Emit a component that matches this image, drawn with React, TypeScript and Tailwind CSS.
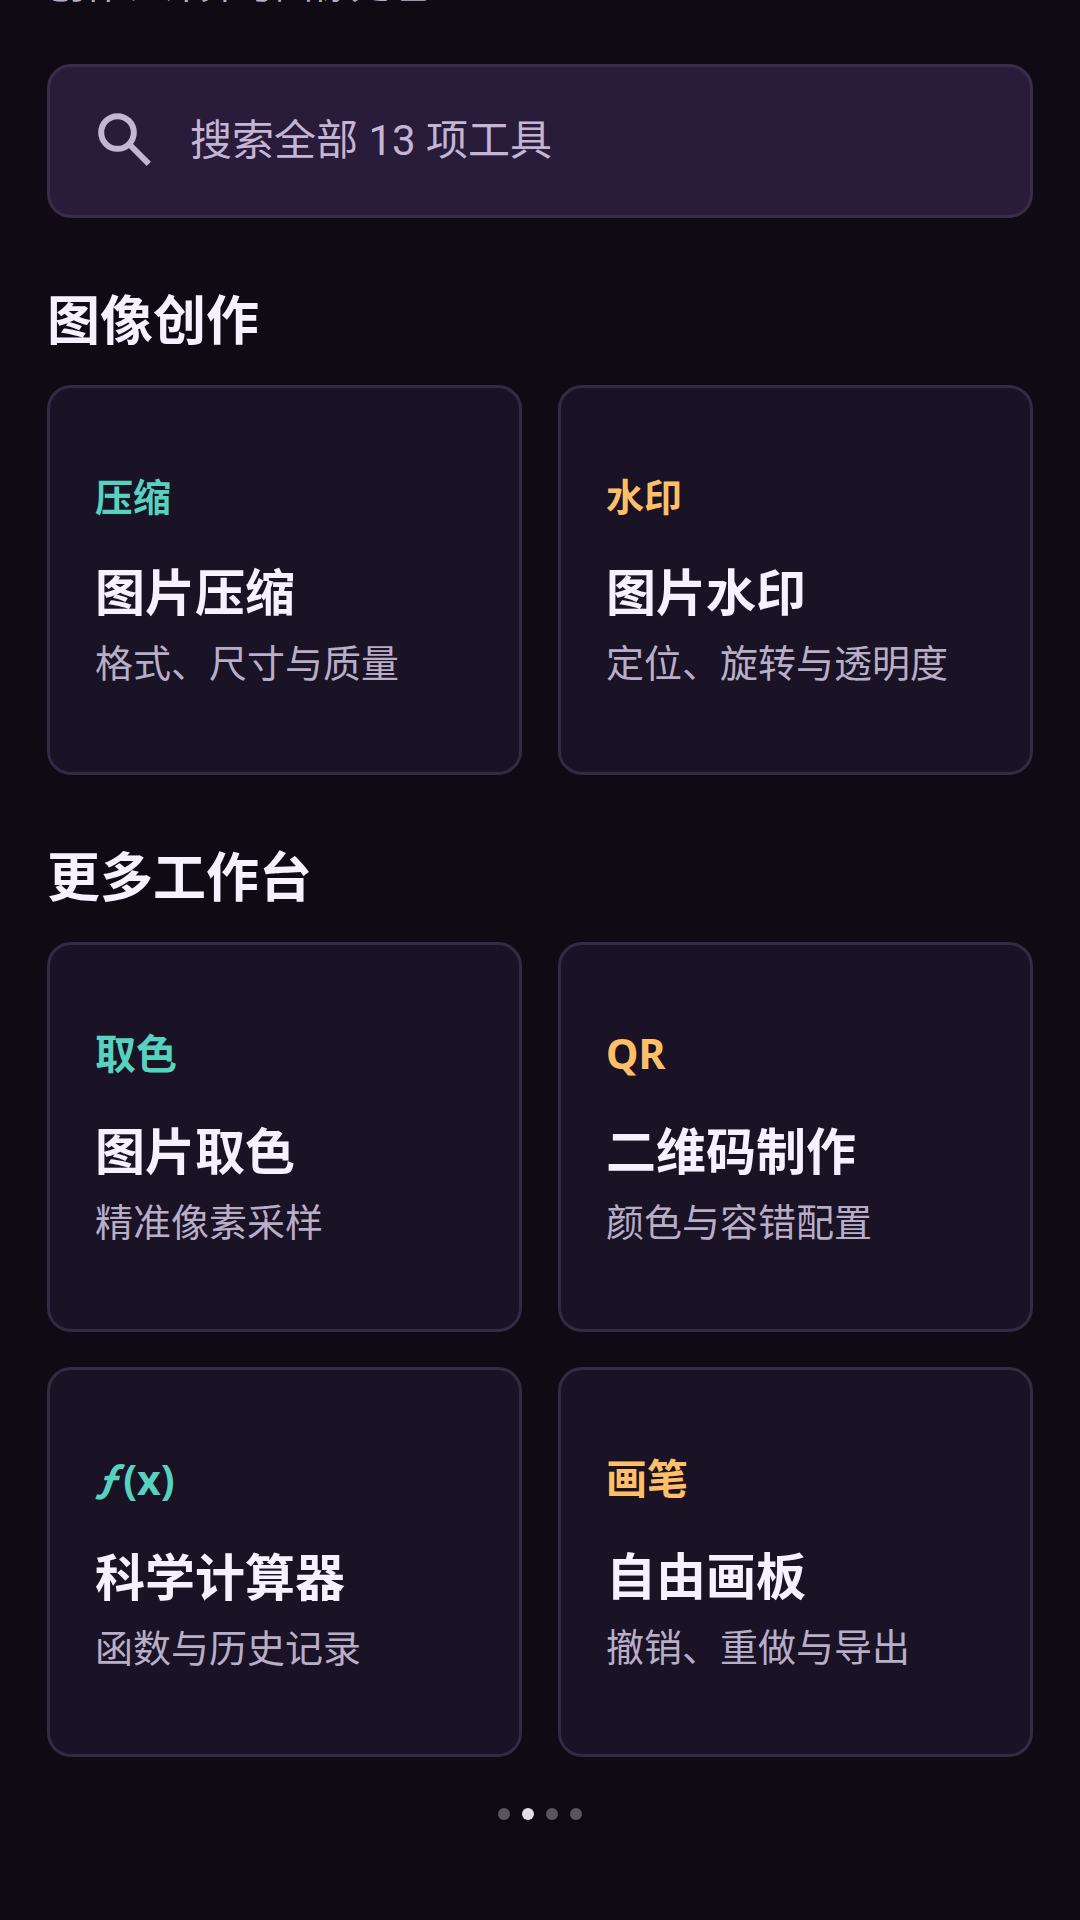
import React from 'react';
import clsx from 'clsx';

type Tool = {
  tag: React.ReactNode;
  title: string;
  desc: string;
  accent: 'teal' | 'amber';
  small?: boolean;
};

const imageTools: Tool[] = [
  { tag: '压缩', title: '图片压缩', desc: '格式、尺寸与质量', accent: 'teal', small: true },
  { tag: '水印', title: '图片水印', desc: '定位、旋转与透明度', accent: 'amber', small: true },
];

const moreTools: Tool[] = [
  { tag: '取色', title: '图片取色', desc: '精准像素采样', accent: 'teal' },
  { tag: 'QR', title: '二维码制作', desc: '颜色与容错配置', accent: 'amber' },
  {
    tag: (
      <>
        <i className="mr-1 font-['Noto_Sans_CJK_SC',sans-serif]">ƒ</i>(x)
      </>
    ),
    title: '科学计算器',
    desc: '函数与历史记录',
    accent: 'teal',
  },
  { tag: '画笔', title: '自由画板', desc: '撤销、重做与导出', accent: 'amber' },
];

const SearchIcon: React.FC = () => (
  <svg
    viewBox="0 0 72 72"
    className="h-[72px] w-[72px] shrink-0 text-[#c4b5d4]"
    fill="none"
    stroke="currentColor"
    strokeWidth="6"
    aria-hidden="true"
  >
    <circle cx="29.5" cy="27.5" r="16.3" />
    <path d="M40.5 38.5 60.8 58.8" />
  </svg>
);

const ToolCard: React.FC<{ tool: Tool }> = ({ tool }) => (
  <a
    href="#"
    className="flex min-h-[390px] flex-col justify-center rounded-[24px] border-3 border-[#352a43] bg-[#1a1225] px-[45px] pb-[2px]"
  >
    <span
      className={clsx(
        'font-bold',
        tool.small ? 'text-[38px] leading-[54px]' : 'text-[41px] leading-[58px]',
        tool.accent === 'teal' ? 'text-[#56d2bf]' : 'text-[#ffbf69]'
      )}
    >
      {tool.tag}
    </span>
    <h3 className="mt-9 text-[50px] leading-[66px] font-bold text-[#f6f0ff]">{tool.title}</h3>
    <p className="mt-[10px] text-[38px] leading-[54px] text-[#b9aec8]">{tool.desc}</p>
  </a>
);

const ToolSection: React.FC<{ title: string; tools: Tool[] }> = ({ title, tools }) => (
  <section className="mt-[67px]">
    <h2 className="mb-[30px] text-[53px] leading-[70px] font-bold text-[#f6f0ff]">{title}</h2>
    <div className="grid grid-cols-2 gap-x-9 gap-y-[35px]">
      {tools.map((tool) => (
        <ToolCard key={tool.title} tool={tool} />
      ))}
    </div>
  </section>
);

export default function App() {
  const activePage = 1;

  return (
    <div
      lang="zh-CN"
      className="min-h-screen bg-[#0f0a14] px-[47px] pb-24 font-['Noto_Sans','Noto_Sans_CJK_SC',sans-serif]"
    >
      {/* Subtitle, scrolled almost out of view */}
      <header className="flex h-[10px] items-end overflow-hidden">
        <p className="text-[38px] leading-[54px] text-[#b9aec8]">创作、计算与图像处理</p>
      </header>

      <label className="mt-[54px] flex h-[154px] items-center gap-[30px] rounded-[24px] border-3 border-[#392d49] bg-[#291b3a] px-[38px]">
        <SearchIcon />
        <input
          type="search"
          aria-label="搜索工具"
          placeholder="搜索全部 13 项工具"
          className="min-w-0 flex-1 bg-transparent font-['Roboto','Noto_Sans_CJK_SC',sans-serif] text-[42px] leading-[60px] text-[#f6f0ff] outline-none placeholder:text-[#c4b5d4]"
        />
      </label>

      <main>
        <ToolSection title="图像创作" tools={imageTools} />
        <ToolSection title="更多工作台" tools={moreTools} />
      </main>

      <nav className="mt-[51px] flex justify-center gap-3" aria-label="分页">
        {[0, 1, 2, 3].map((page) => (
          <button
            key={page}
            type="button"
            aria-label={`第 ${page + 1} 页`}
            className={clsx('h-3 w-3 rounded-full', page === activePage ? 'bg-[#e2dfe5]' : 'bg-[#5a5460]')}
          />
        ))}
      </nav>
    </div>
  );
}
